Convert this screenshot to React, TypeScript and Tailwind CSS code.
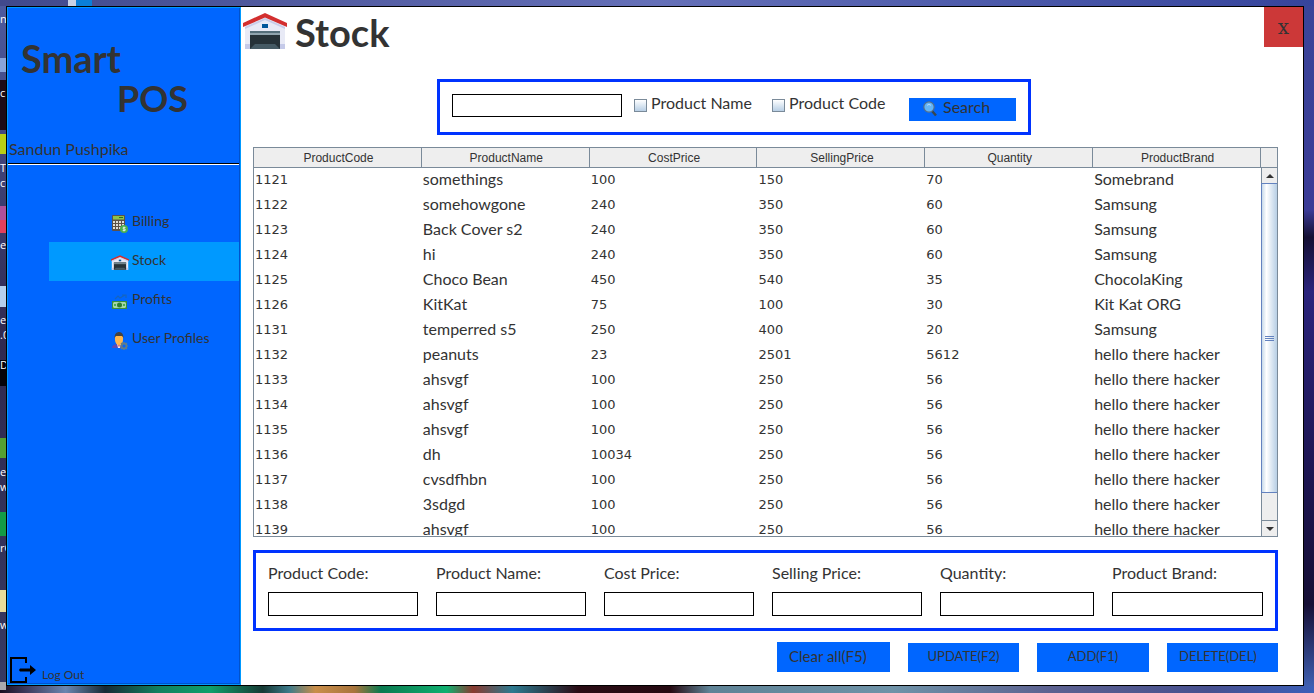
import { useState } from "react"

const gothic = "font-['Lato','Open_Sans',sans-serif]"

const columns = ["ProductCode", "ProductName", "CostPrice", "SellingPrice", "Quantity", "ProductBrand"]

const products = [
    ["1121", "somethings", "100", "150", "70", "Somebrand"],
    ["1122", "somehowgone", "240", "350", "60", "Samsung"],
    ["1123", "Back Cover s2", "240", "350", "60", "Samsung"],
    ["1124", "hi", "240", "350", "60", "Samsung"],
    ["1125", "Choco Bean", "450", "540", "35", "ChocolaKing"],
    ["1126", "KitKat", "75", "100", "30", "Kit Kat ORG"],
    ["1131", "temperred s5", "250", "400", "20", "Samsung"],
    ["1132", "peanuts", "23", "2501", "5612", "hello there hacker"],
    ["1133", "ahsvgf", "100", "250", "56", "hello there hacker"],
    ["1134", "ahsvgf", "100", "250", "56", "hello there hacker"],
    ["1135", "ahsvgf", "100", "250", "56", "hello there hacker"],
    ["1136", "dh", "10034", "250", "56", "hello there hacker"],
    ["1137", "cvsdfhbn", "100", "250", "56", "hello there hacker"],
    ["1138", "3sdgd", "100", "250", "56", "hello there hacker"],
    ["1139", "ahsvgf", "100", "250", "56", "hello there hacker"],
]

const fields = ["Product Code:", "Product Name:", "Cost Price:", "Selling Price:", "Quantity:", "Product Brand:"]

function GarageIcon({ className }: { className: string }) {
    return (
        <svg viewBox="0 0 44 36" className={className} aria-hidden="true">
            <path d="M2 12 22 3l20 9v24H2z" fill="#e8eaf6" />
            <path d="M2 31h5v5H2zM37 31h5v5h-5z" fill="#c5cae9" />
            <path d="M2 14 22 5l20 9v2L22 7 2 16z" fill="#c9cdea" />
            <path d="M22 0 44 10v4L22 4.500 0 14v-4z" fill="#d32f2f" />
            <path d="M19 11h6v4h-6z" fill="#01579b" />
            <path d="M7 18h30v18H7z" fill="#263238" />
            <path d="M7 18h30v2H7z" fill="#546e7a" />
            <path d="M7 20h30v2H7z" fill="#90a4ae" />
            <path d="M12 31h20l5 5H7z" fill="#455a64" />
        </svg>
    )
}

function CalculatorIcon() {
    return (
        <svg viewBox="0 0 16 18" className="h-[18px] w-4" aria-hidden="true">
            <rect x="0" y="0" width="13" height="16" rx="1" fill="#5d5148" />
            <rect x="1" y="1" width="11" height="3.500" fill="#8bc34a" />
            <path d="M7 2h4v1H7z" fill="#33691e" />
            <path
                d="M1 6h2v2H1zM4 6h2v2H4zM7 6h2v2H7zM10 6h2v2h-2zM1 9h2v2H1zM4 9h2v2H4zM7 9h2v2H7zM10 9h2v2h-2zM1 12h2v2H1zM4 12h2v2H4zM7 12h2v2H7z"
                fill="#e0dcd8"
            />
            <circle cx="12" cy="14" r="4" fill="#4caf50" />
            <path d="M13.500 12.500h-2.300v1.500h2v1.500h-2.500M12 11.500v5" stroke="#e8f5e9" strokeWidth=".8" fill="none" />
        </svg>
    )
}

function MoneyIcon() {
    return (
        <svg viewBox="0 0 16 16" className="size-4" aria-hidden="true">
            <path d="m3 5 3-3 2 2 5-3M10 1h4v3" stroke="#1565c0" strokeWidth="1.200" fill="none" />
            <path d="M0 7h15v8H0z" fill="#388e3c" />
            <path d="M2 8h11l1 1v4l-1 1H2l-1-1V9z" fill="#a5d6a7" />
            <circle cx="7.500" cy="11" r="2.500" fill="#2e7d32" />
            <path d="M2 10h2v2H2zM11 10h2v2h-2z" fill="#4caf50" />
        </svg>
    )
}

function UserIcon() {
    return (
        <svg viewBox="0 0 16 18" className="h-[18px] w-4" aria-hidden="true">
            <path d="M0 16c0-3 3-4 6-4s5 1 5 4z" fill="#5e4bb5" />
            <path d="M5 11h4l-1 5H6z" fill="#fff" />
            <path d="M6 12h2l-1 4z" fill="#d32f2f" />
            <path d="M3 4h8v4c0 3-2 5-4 5s-4-2-4-5z" fill="#ffb74d" />
            <path d="M2.500 6c0-4 2-6 4.500-6s4.500 2 4.500 6L10 4H4z" fill="#424242" />
            <circle cx="12" cy="14" r="2.500" fill="none" stroke="#607d8b" strokeWidth="1.800" />
            <path d="M12 10v2M12 16v2M8 14h2M14 14h2M9 11l1.500 1.500M15 11l-1.500 1.500M9 17l1.500-1.500M15 17l-1.500-1.500" stroke="#607d8b" strokeWidth="1.200" />
        </svg>
    )
}

function SearchIcon() {
    return (
        <svg viewBox="0 0 14 16" className="h-4 w-[14px]" aria-hidden="true">
            <path d="m9 10 4 4.500" stroke="#37474f" strokeWidth="2.500" />
            <circle cx="6" cy="6" r="5.200" fill="#64b5f6" stroke="#546e8a" strokeWidth="1.200" />
            <path d="M4 4.500c1-1.300 3-1.300 4 0" stroke="#bbdefb" strokeWidth="1" fill="none" />
        </svg>
    )
}

function LogoutIcon() {
    return (
        <svg viewBox="0 0 26 26" className="size-[26px]" aria-hidden="true">
            <path d="M16 6V1H1v24h15v-5" stroke="#000" strokeWidth="2" fill="none" />
            <path d="M10 11.500h10V8l6 5-6 5v-3.500H10L9 13z" fill="#000" />
        </svg>
    )
}

const menu = [
    { label: "Billing", icon: <CalculatorIcon /> },
    { label: "Stock", icon: <GarageIcon className="h-[15px] w-[18px]" /> },
    { label: "Profits", icon: <MoneyIcon /> },
    { label: "User Profiles", icon: <UserIcon /> },
]

// shortcuts that peek out from behind the window
const shortcuts = [
    { text: "np", top: 12 },
    { text: "c", top: 86 },
    { text: "T", top: 161 },
    { text: "cu", top: 176 },
    { text: "e", top: 238 },
    { text: "ea", top: 313 },
    { text: ".0", top: 328 },
    { text: "D", top: 358 },
    { text: "er", top: 465 },
    { text: "wn", top: 480 },
    { text: "rC", top: 541 },
    { text: "we", top: 618 },
]

const blobs = [
    { top: 58, height: 14, color: "#8aa4d8" },
    { top: 80, height: 50, color: "#1d0b18" },
    { top: 134, height: 20, color: "#b9cf14" },
    { top: 206, height: 14, color: "#b0509a" },
    { top: 220, height: 13, color: "#e0405c" },
    { top: 286, height: 21, color: "#b5d0ec" },
    { top: 360, height: 26, color: "#050308" },
    { top: 438, height: 20, color: "#55a030" },
    { top: 512, height: 24, color: "#139c45" },
    { top: 590, height: 22, color: "#e8dc9a" },
    { top: 682, height: 8, color: "#a9a9ad" },
]

function Desktop() {
    return (
        <div className="absolute inset-0 flex flex-col overflow-hidden" aria-hidden="true">
            <div className="flex h-[6px] bg-linear-to-r from-[#41498c] via-[#6570b8] to-[#36449c] pl-[68px]">
                <span className="w-2 bg-[#c9d3e6]" />
                <span className="w-4 bg-[#0a7fd8]" />
            </div>
            <div className="flex flex-1 justify-between">
                <div className="w-[6px] bg-linear-to-b from-[#4d5a9e] via-[#30294e] to-[#373a62]" />
                <div className="w-[10px] bg-[linear-gradient(#3a4599,#3b3b96_30%,#151033_34%,#2b247c_42%,#1d1550_70%,#160f35_88%,#3f5fb0)]" />
            </div>
            <div className="h-[7px] bg-[linear-gradient(90deg,#1a0f20,#3d3a5c_2%,#6a86b0_5%,#172a35_8%,#11805f_12%,#0fa06b_16%,#173a35_20%,#3d7a8a_22%,#c98e4a_24%,#a8743c_27%,#0b7a50_29%,#10b070_34%,#8a3a30_36%,#2d7a90_39%,#2a0c14_44%,#260a12_51%,#5f8396_54%,#6f93a8_68%,#5c6190_80%,#47508f_92%,#3c5fb8)]" />
            {blobs.map(({ top, height, color }) => (
                <span key={top} className="absolute left-0 w-[6px]" style={{ top, height, background: color }} />
            ))}
            <div className="absolute inset-y-0 left-0 w-[6px] overflow-hidden font-['Open_Sans',sans-serif] text-[11px] leading-[14px] text-white">
                {shortcuts.map(({ text, top }) => (
                    <span key={top} className="absolute left-0" style={{ top }}>
                        {text}
                    </span>
                ))}
            </div>
        </div>
    )
}

function Sidebar() {
    return (
        <aside className="flex w-[234px] shrink-0 flex-col border border-[#0099ff] bg-[#0066ff] pr-px shadow-[inset_-1px_-1px_0_#0052cc]">
            <div className="pt-[31px] leading-[39px] font-bold">
                <p className="pl-[13px] text-[38px]">Smart</p>
                <p className="pl-[109px] text-4xl">POS</p>
            </div>
            <p className="mt-[19px] h-[26px] pl-px leading-6">Sandun Pushpika</p>
            <hr className="h-[2px] border-t border-b border-t-black border-b-white" />
            <nav className="mt-[38px] flex flex-col pl-[41px]">
                {menu.map(({ label, icon }) => (
                    <a
                        key={label}
                        href="#"
                        className={`flex h-[39px] items-center gap-[3px] pl-[62px] text-sm ${label === "Stock" ? "bg-[#0099ff]" : ""}`}
                    >
                        <span className="flex w-[18px] justify-center pt-[2px]">{icon}</span>
                        <span className="pb-1">{label}</span>
                    </a>
                ))}
            </nav>
            <button className="mt-auto flex items-end gap-[6px] pb-px pl-[2px] text-xs">
                <LogoutIcon />
                <span>Log Out</span>
            </button>
        </aside>
    )
}

function SearchBar() {
    const [query, setQuery] = useState("")
    const checkbox =
        "h-[13px] w-[13px] appearance-none border border-[#7a8a99] bg-linear-to-b from-white to-[#b8cfe5] checked:bg-[#6382bf]"

    return (
        <div className="ml-[184px] flex h-14 w-fit items-center border-[3px] border-[#0033ff] px-3">
            <input
                type="text"
                aria-label="Search products"
                value={query}
                onChange={(e) => setQuery(e.target.value)}
                className="mb-[3px] h-[23px] w-[170px] border border-black px-1 outline-none"
            />
            <label className="mb-1 ml-3 flex w-[138px] items-center gap-1">
                <input type="checkbox" className={checkbox} />
                <span className="pb-1">Product Name</span>
            </label>
            <label className="mb-1 flex w-[137px] items-center gap-1">
                <input type="checkbox" className={checkbox} />
                <span className="pb-1">Product Code</span>
            </label>
            <button className="mt-1 flex h-[23px] w-[107px] items-center gap-[6px] bg-[#0066ff] pl-[14px]">
                <SearchIcon />
                <span className="pb-1">Search</span>
            </button>
        </div>
    )
}

function ScrollBar() {
    return (
        <div className="flex w-4 shrink-0 flex-col">
            <div className="h-5 border-b border-[#7a8a99] bg-[#eeeeee]" />
            <div className="flex flex-1 flex-col border-l border-[#7a8a99] bg-[#eeeeee]">
                <button aria-label="Scroll up" className="flex h-[15px] items-center justify-center">
                    <svg viewBox="0 0 8 4" className="h-1 w-2">
                        <path d="M0 4 4 0l4 4z" fill="#333" />
                    </svg>
                </button>
                <div className="flex flex-1 flex-col">
                    <div className="-ml-px flex flex-[310] items-center justify-center border border-r-0 border-[#6382bf] bg-linear-to-r from-[#c8daea] via-white via-30% to-[#b8cfe5]">
                        <div className="flex w-[9px] flex-col gap-px">
                            <span className="h-px bg-[#6382bf]" />
                            <span className="h-px bg-[#6382bf]" />
                            <span className="h-px bg-[#6382bf]" />
                        </div>
                    </div>
                    <div className="flex-[27]" />
                </div>
                <button aria-label="Scroll down" className="flex h-4 items-center justify-center border-t border-[#7a8a99]">
                    <svg viewBox="0 0 8 4" className="h-1 w-2">
                        <path d="M0 0h8L4 4z" fill="#333" />
                    </svg>
                </button>
            </div>
        </div>
    )
}

function StockTable() {
    return (
        <div className="mt-3 flex min-h-0 flex-1 overflow-hidden border border-[#7a8a99]">
            <div className="min-w-0 flex-1 overflow-hidden">
                <table className="w-full table-fixed border-separate border-spacing-0">
                    <thead>
                        <tr>
                            {columns.map((column) => (
                                <th
                                    key={column}
                                    className="h-5 border-r border-b border-[#7a8a99] bg-[#eeeeee] p-0 pl-[2px] font-['Liberation_Sans',sans-serif] text-xs leading-4 font-normal"
                                >
                                    {column}
                                </th>
                            ))}
                        </tr>
                    </thead>
                    <tbody>
                        {products.map((row) => (
                            <tr key={row[0]}>
                                {row.map((cell, i) => (
                                    <td
                                        key={i}
                                        className={`h-[25px] p-0 pl-px whitespace-nowrap ${
                                            i === 1 || i === 5
                                                ? "pb-1 leading-[21px]"
                                                : "pb-[2px] font-['DejaVu_Sans',sans-serif] text-[13px] leading-[23px]"
                                        }`}
                                    >
                                        {cell}
                                    </td>
                                ))}
                            </tr>
                        ))}
                    </tbody>
                </table>
            </div>
            <ScrollBar />
        </div>
    )
}

function ProductForm() {
    return (
        <form
            id="product"
            className="mt-[13px] grid h-[81px] shrink-0 grid-cols-[150fr_150fr_150fr_150fr_154fr_151fr] gap-[18px] border-[3px] border-[#0033ff] px-3 pt-2"
        >
            {fields.map((field) => (
                <label key={field} className="flex min-w-0 flex-col gap-[7px] leading-6">
                    {field}
                    <input type="text" className="h-6 w-full border border-black px-1 outline-none" />
                </label>
            ))}
        </form>
    )
}

export default function App() {
    const action = "h-[29px] bg-[#0066ff] pb-[2px] text-[13px]"

    return (
        <div className={`relative flex h-screen pt-[6px] pr-[10px] pb-[7px] pl-[6px] text-base text-[#333333] ${gothic}`}>
            <Desktop />
            <div className="relative flex min-w-0 flex-1 border border-black bg-white">
                <Sidebar />
                <main className="flex min-w-0 flex-1 flex-col">
                    <header className="flex items-start justify-between">
                        <div className="flex items-start gap-2 pt-[6px] pl-[2px]">
                            <GarageIcon className="h-9 w-11" />
                            <h1 className="text-[38px] leading-[38px] font-bold">Stock</h1>
                        </div>
                        <button
                            aria-label="Close"
                            className="h-10 w-[39px] bg-[#cc3838] font-['DejaVu_Serif',serif] text-xl leading-9"
                        >
                            x
                        </button>
                    </header>
                    <div className="flex min-h-0 flex-1 flex-col pt-[28px] pr-[25px] pb-[13px] pl-3">
                        <SearchBar />
                        <StockTable />
                        <ProductForm />
                        <div className="mt-[11px] flex items-end justify-end gap-[18px]">
                            <button type="reset" form="product" className="h-[30px] w-[113px] bg-[#0066ff] pb-[2px] pl-3 text-left text-[15px]">
                                Clear all(F5)
                            </button>
                            <button className={`w-[111px] ${action}`}>UPDATE(F2)</button>
                            <button className={`w-[112px] ${action}`}>ADD(F1)</button>
                            <button className={`w-[111px] pl-3 text-left ${action}`}>DELETE(DEL)</button>
                        </div>
                    </div>
                </main>
            </div>
        </div>
    )
}
